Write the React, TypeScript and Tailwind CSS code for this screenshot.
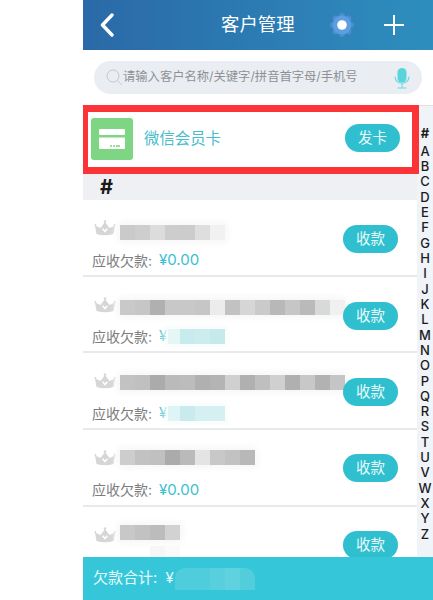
const FONT = "font-['Inter','Noto_Sans_CJK_SC',sans-serif]";

type Row = { cells: string[]; offset: string; btn: string; amount: string; cyan?: string[]; extra?: boolean };

const rows: Row[] = [
  {
    cells: ['bg-[#cacaca]', 'bg-[#cecece]', 'bg-[#dcdcdc]', 'bg-[#cdcdcd]', 'bg-[#cccccc]', 'bg-[#dedede]', 'bg-[#f1f1f1]'],
    offset: 'mt-[5px]',
    btn: 'mt-[25px]',
    amount: '¥0.00',
  },
  {
    cells: ['bg-[#c9c9c9]', 'bg-[#c6c6c6]', 'bg-[#b0b0b0]', 'bg-[#c8c8c8]', 'bg-[#c8c8c8]', 'bg-[#c6c6c6]', 'bg-[#ececec]', 'bg-[#c2c2c2]', 'bg-[#d6d6d6]', 'bg-[#cacaca]', 'bg-[#b8b8b8]', 'bg-[#c6c6c6]', 'bg-[#bababa]', 'bg-[#d8dada]', 'bg-[#f0f0f0]'],
    offset: 'mt-[3px]',
    btn: 'mt-[25px]',
    amount: '¥',
    cyan: ['bg-[#e4f6f6]', 'bg-[#c8ebed]', 'bg-[#cdeced]', 'bg-[#c6eaec]'],
  },
  {
    cells: ['bg-[#c2c2c2]', 'bg-[#c0c0c0]', 'bg-[#ababab]', 'bg-[#bababa]', 'bg-[#bcbcbc]', 'bg-[#b0b0b0]', 'bg-[#b4b4b4]', 'bg-[#d0d0d0]', 'bg-[#b0b0b0]', 'bg-[#bfbfbf]', 'bg-[#d0d0d0]', 'bg-[#b0b0b0]', 'bg-[#c8c8c8]', 'bg-[#b2b2b2]', 'bg-[#c4c6c6]'],
    offset: 'mt-[2px]',
    btn: 'mt-[25px]',
    amount: '¥',
    cyan: ['bg-[#dff4f4]', 'bg-[#c9ebed]', 'bg-[#d6f0f1]', 'bg-[#d6f0f1]'],
  },
  {
    cells: ['bg-[#cdcdcd]', 'bg-[#c2c2c2]', 'bg-[#c0c0c0]', 'bg-[#ababab]', 'bg-[#bababa]', 'bg-[#e4e4e4]', 'bg-[#c8c8c8]', 'bg-[#c2c2c2]', 'bg-[#b8b8b8]'],
    offset: 'mt-[0px]',
    btn: 'mt-[24px]',
    amount: '¥0.00',
  },
  {
    cells: ['bg-[#c8c8c8]', 'bg-[#c2c2c2]', 'bg-[#bcbcbc]', 'bg-[#d2d2d2]'],
    offset: 'mt-[-2px]',
    btn: 'mt-[24px]',
    amount: '',
    extra: true,
  },
];

const letters = 'ABCDEFGHIJKLMNOPQRSTUVWXYZ'.split('');

function Crown() {
  return (
    <svg width="22" height="16" viewBox="0 0 22 16" className="shrink-0">
      <path d="M1 5.5 L6.5 8 L11 2 L15.5 8 L21 5.5 L19.5 14 Q11 16.5 2.5 14 Z" fill="#d6d6d6" />
      <circle cx="1.4" cy="5" r="1" fill="#d6d6d6" />
      <circle cx="20.6" cy="5" r="1" fill="#d6d6d6" />
      <circle cx="11" cy="1.6" r="1.3" fill="#d6d6d6" />
      <path d="M8.6 8.8 L11 11.6 L13.4 8.8" fill="none" stroke="#ffffff" strokeWidth="1.5" />
    </svg>
  );
}

function Pill({ label, extraClass }: { label: string; extraClass: string }) {
  return (
    <div className={`flex h-[28px] w-[55px] items-center justify-center rounded-full bg-[#30bfcf] text-[14.5px] text-[#e8fbfc] ${extraClass}`}>
      {label}
    </div>
  );
}

function CustomerRow({ row }: { row: Row }) {
  return (
    <div className="flex h-[76.67px] shrink-0 border-b-2 border-[#e8e9ec] bg-white pl-[9px] pr-[19px]">
      <div className="min-w-0 flex-1">
        <div className="mt-[20px] flex h-[16px] items-start pl-[2px]">
          <Crown />
          <div className={`ml-[4px] flex h-[15px] rounded-[3px] shadow-[0_0_6px_4px_#f8f8f8] ${row.offset}`}>
            {row.cells.map((c, i) => (
              <div key={i} className={`h-[15px] w-[15px] ${c}`} />
            ))}
          </div>
        </div>
        {row.extra ? (
          <div className="ml-[58px] mt-[3px] flex h-[15px]">
            <div className="h-[15px] w-[15px] bg-[#f6f6f6]" />
            <div className="h-[15px] w-[15px] bg-[#fafafa]" />
          </div>
        ) : (
          <div className="mt-[14px] flex h-[20px] items-center text-[14px] text-[#7d7d7d]">
            <span>应收欠款:&nbsp;</span>
            <span className="ml-[3px] text-[15px] text-[#39bfd0]">{row.amount}</span>
            {row.cyan && (
              <div className="ml-[1px] flex shadow-[0_0_6px_4px_#fafdfd]">
                {row.cyan.map((c, i) => (
                  <div key={i} className={`h-[15px] ${i === 0 ? 'w-[12px]' : 'w-[15px]'} ${c}`} />
                ))}
              </div>
            )}
          </div>
        )}
      </div>
      <Pill label="收款" extraClass={`shrink-0 ${row.btn}`} />
    </div>
  );
}

export default function App() {
  return (
    <div className={`flex h-[600px] w-[433px] overflow-hidden bg-white ${FONT}`}>
      <div className="w-[83px] shrink-0 bg-white" />
      <div className="relative flex h-[600px] w-[350px] shrink-0 flex-col overflow-hidden">
        <header className="flex h-[50px] shrink-0 items-center bg-linear-to-r from-[#2a69a7] to-[#2e8ebe] text-white">
          <svg width="16" height="24" viewBox="0 0 16 24" className="ml-[16px] shrink-0">
            <path d="M13 2 L3.5 12 L13 22" fill="none" stroke="#ffffff" strokeWidth="3.4" strokeLinecap="round" strokeLinejoin="round" />
          </svg>
          <div className="ml-[106px] w-[74px] whitespace-nowrap text-[18.4px]">客户管理</div>
          <svg width="24" height="24" viewBox="0 0 24 24" className="ml-[35px] shrink-0">
            <g fill="#4a8dd2">
              <circle cx="12" cy="3" r="3" />
              <circle cx="12" cy="21" r="3" />
              <circle cx="3" cy="12" r="3" />
              <circle cx="21" cy="12" r="3" />
              <circle cx="5.6" cy="5.6" r="3" />
              <circle cx="18.4" cy="5.6" r="3" />
              <circle cx="5.6" cy="18.4" r="3" />
              <circle cx="18.4" cy="18.4" r="3" />
            </g>
            <circle cx="12" cy="12" r="9.4" fill="#5c9ee0" />
            <circle cx="12" cy="12" r="4.8" fill="#ffffff" />
          </svg>
          <svg width="22" height="22" viewBox="0 0 22 22" className="ml-[29px] shrink-0">
            <path d="M11 1 V21 M1 11 H21" stroke="#ffffff" strokeWidth="2" />
          </svg>
        </header>

        <div className="flex h-[55px] shrink-0 items-center bg-white px-[11px]">
          <div className="flex h-[33px] w-full items-center rounded-full bg-[#eaedf2]">
            <svg width="17" height="17" viewBox="0 0 17 17" className="ml-[12px] shrink-0">
              <circle cx="7" cy="7" r="6" fill="none" stroke="#c4c8ce" strokeWidth="1" />
              <path d="M11.5 11.5 L16 16" stroke="#c4c8ce" strokeWidth="1" />
            </svg>
            <span className="whitespace-nowrap text-[12.3px] text-[#8f9196]">请输入客户名称/关键字/拼音首字母/手机号</span>
            <svg width="16" height="21" viewBox="0 0 16 21" className="ml-[36px] mt-[1px] shrink-0">
              <rect x="3.5" y="0" width="9" height="14.5" rx="4.5" fill="#58d4da" />
              <path d="M1 8.5 C1 17.5 15 17.5 15 8.5 M8 15.5 V19.5 M3.5 20 H12.5" fill="none" stroke="#6fdae0" strokeWidth="1.2" />
            </svg>
          </div>
        </div>

        <div className="flex min-h-0 flex-1">
          <main className="relative flex w-[334px] shrink-0 flex-col">
            <div className="relative z-10 flex h-[69px] w-[336px] shrink-0 items-center border-[7px] border-l-[5px] border-[#fb3537] bg-white pb-[2px]">
              <div className="ml-[3px] flex h-[42px] w-[42px] shrink-0 items-center justify-center rounded-[3px] bg-[#7ed583]">
                <svg width="26" height="20" viewBox="0 0 26 20">
                  <rect x="0" y="0" width="26" height="6" fill="#ffffff" rx="1" />
                  <path d="M0 8.5 H26 V19 Q26 20 25 20 H1 Q0 20 0 19 Z" fill="#ffffff" />
                  <path d="M11 17 H13 M14 17 H16 M17 17 H21" stroke="#7ed583" strokeWidth="1.6" />
                </svg>
              </div>
              <span className="ml-[11px] text-[15.4px] text-[#49bdcc]">微信会员卡</span>
              <div className="ml-auto mr-[12px]">
                <Pill label="发卡" extraClass="mb-[1px]" />
              </div>
            </div>
            <div className="flex h-[26px] shrink-0 items-center bg-[#eef0f3] pl-[17px] text-[20px] font-bold leading-none text-[#1a1a1a]">#</div>
            {rows.map((row, i) => (
              <CustomerRow key={i} row={row} />
            ))}
          </main>
          <aside className="flex w-[16px] shrink-0 flex-col items-center border-t border-[#dfe1e5] bg-[#f0f3f8] pt-[20px] text-[13px] font-medium leading-[15.32px] text-[#1c1c1c]">
            <div className="mb-[2.5px] font-bold">#</div>
            {letters.map((l) => (
              <div key={l}>{l}</div>
            ))}
          </aside>
        </div>

        <footer className="absolute bottom-0 left-0 right-0 flex h-[43px] items-center bg-[#35c7d9] pl-[10px] text-[15px] text-[#e6fbfd]">
          <span>欠款合计:&nbsp;</span>
          <span className="ml-[4px]">¥</span>
          <div className="ml-[1px] flex h-[22px] overflow-hidden rounded-t-[10px]">
            <div className="w-[35px] bg-[#50cddc]" />
            <div className="w-[15px] bg-[#58cfdd]" />
            <div className="w-[15px] bg-[#5fd1df]" />
            <div className="w-[15px] bg-[#52cddc]" />
          </div>
        </footer>
      </div>
    </div>
  );
}
